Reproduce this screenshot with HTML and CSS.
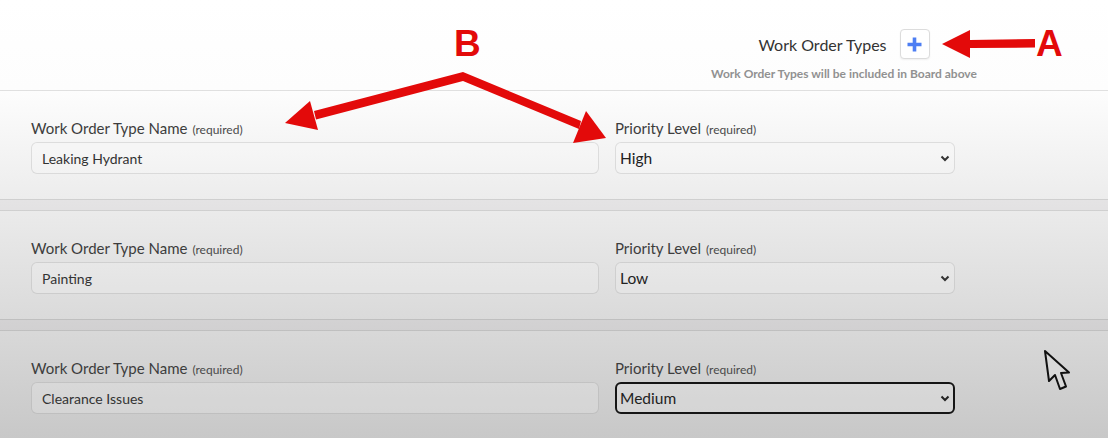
FILE: index.html
```html
<!DOCTYPE html>
<html lang="en">
<head>
<meta charset="utf-8">
<title>Work Order Types</title>
<link rel="stylesheet" href="styles.css">
</head>
<body>
<div class="page">
  <header class="top">
    <div class="types">
      <div class="types-row">
        <span class="types-title">Work Order Types</span>
        <button class="add-btn" type="button" aria-label="Add work order type">
          <svg width="15" height="15" viewBox="0 0 15 15"><path d="M7.5 0.5v14M0.5 7.5h14" stroke="#4d7ef3" stroke-width="3.6" fill="none"/></svg>
        </button>
      </div>
      <p class="types-note">Work Order Types will be included in Board above</p>
    </div>
  </header>

  <main class="list">
    <section class="row">
      <div class="field">
        <label class="label">Work Order Type Name <small>(required)</small></label>
        <input class="input" type="text" value="Leaking Hydrant">
      </div>
      <div class="field">
        <label class="label">Priority Level <small>(required)</small></label>
        <div class="select-wrap">
          <select class="select"><option selected>High</option><option>Medium</option><option>Low</option></select>
          <svg class="chev" width="10" height="7" viewBox="0 0 10 7"><path d="M1.5 1.5L5 5l3.5-3.5" stroke="#333" stroke-width="2" fill="none"/></svg>
        </div>
      </div>
    </section>

    <section class="row">
      <div class="field">
        <label class="label">Work Order Type Name <small>(required)</small></label>
        <input class="input" type="text" value="Painting">
      </div>
      <div class="field">
        <label class="label">Priority Level <small>(required)</small></label>
        <div class="select-wrap">
          <select class="select"><option>High</option><option>Medium</option><option selected>Low</option></select>
          <svg class="chev" width="10" height="7" viewBox="0 0 10 7"><path d="M1.5 1.5L5 5l3.5-3.5" stroke="#333" stroke-width="2" fill="none"/></svg>
        </div>
      </div>
    </section>

    <section class="row">
      <div class="field">
        <label class="label">Work Order Type Name <small>(required)</small></label>
        <input class="input" type="text" value="Clearance Issues">
      </div>
      <div class="field">
        <label class="label">Priority Level <small>(required)</small></label>
        <div class="select-wrap">
          <select class="select select-focus"><option>High</option><option selected>Medium</option><option>Low</option></select>
          <svg class="chev" width="10" height="7" viewBox="0 0 10 7"><path d="M1.5 1.5L5 5l3.5-3.5" stroke="#222" stroke-width="2" fill="none"/></svg>
        </div>
      </div>
    </section>
  </main>

  <div class="annot" aria-hidden="true">
    <svg class="annot-svg" width="1108" height="438" viewBox="0 0 1108 438">
      <g fill="#e30a0a" stroke="none">
        <!-- A arrow -->
        <polygon points="1035,39 970,40 970,30 942,44 970,58 970,48 1035,47.5"/>
        <!-- B arrows -->
        <polygon points="314,111 463,72 581,121 579,129 463,81 316,119.5"/>
        <polygon points="285,123 310,101 318,130"/>
        <polygon points="606,138 586,111 573,143"/>
      </g>
      <!-- mouse cursor -->
      <path class="cursor" d="M1045 351 L1049 381 L1055 375 L1060 389 L1066 386.5 L1061 373 L1069 372.5 Z"/>
    </svg>
    <span class="tag tag-a">A</span>
    <span class="tag tag-b">B</span>
  </div>
</div>
</body>
</html>
```

FILE: styles.css
```css
* { box-sizing: border-box; }

html, body {
  margin: 0;
  padding: 0;
}

body {
  font-family: Lato, "Open Sans", "Liberation Sans", sans-serif;
  color: #333;
  background: #c9c9c9;
}

.page {
  position: relative;
  width: 1108px;
  min-height: 438px;
  overflow: hidden;
  background: linear-gradient(to bottom, #ffffff 0px, #fdfdfd 90px, #c8c8c8 438px);
}

/* header */
.top {
  height: 90px;
  display: flex;
  justify-content: flex-end;
  padding-top: 29px;
  padding-right: 35px;
}

.types {
  width: 458px;
  display: flex;
  flex-direction: column;
  align-items: center;
}

.types-row {
  display: flex;
  align-items: center;
  gap: 13px;
}

.types-title {
  font-size: 16px;
  color: #333;
}

.add-btn {
  width: 30px;
  height: 30px;
  padding: 0;
  display: flex;
  align-items: center;
  justify-content: center;
  background: #fff;
  border: 1px solid #dcdcdc;
  border-radius: 4px;
  box-shadow: 0 1px 2px rgba(0,0,0,0.06);
}

.types-note {
  margin: 8px 0 0;
  font-size: 12px;
  font-weight: 700;
  line-height: 14px;
  color: #919191;
}

/* list of rows */
.list {
  display: flex;
  flex-direction: column;
}

.row {
  height: 120px;
  display: grid;
  grid-template-columns: 568px 340px;
  column-gap: 16px;
  align-content: start;
  padding: 28px 0 0 31px;
  border-top: 1px solid rgba(0,0,0,0.11);
  border-bottom: 10px solid rgba(70,40,70,0.045);
  box-shadow: inset 0 -1px 0 rgba(0,0,0,0.12);
}

.field {
  display: flex;
  flex-direction: column;
  gap: 5px;
}

.label {
  display: flex;
  align-items: baseline;
  gap: 5px;
  height: 18px;
  font-size: 15px;
  line-height: 18px;
  color: #3d3d3d;
}

.label small {
  font-size: 12px;
  line-height: 18px;
  color: #4a4a4a;
}

.input {
  height: 32px;
  width: 100%;
  padding: 0 10px;
  font-family: inherit;
  font-size: 14px;
  color: #333;
  background: rgba(255,255,255,0.18);
  border: 1px solid rgba(0,0,0,0.1);
  border-radius: 6px;
  outline: none;
}

.select-wrap {
  display: grid;
  align-items: center;
}

.select,
.chev {
  grid-area: 1 / 1;
}

.select {
  -webkit-appearance: none;
  appearance: none;
  height: 32px;
  width: 100%;
  padding: 0 24px 0 4px;
  font-family: inherit;
  font-size: 15.5px;
  color: #222;
  background: rgba(255,255,255,0.18);
  border: 1px solid rgba(0,0,0,0.1);
  border-radius: 6px;
  outline: none;
}

.select-focus {
  border: 2px solid #151515;
  padding-left: 3px;
}

.chev {
  justify-self: end;
  margin-right: 5px;
  pointer-events: none;
}

/* annotation overlay */
.annot {
  position: absolute;
  inset: 0;
  pointer-events: none;
}

.annot-svg {
  position: absolute;
  left: 0;
  top: 0;
}

.cursor {
  fill: #d9d9d9;
  stroke: #111;
  stroke-width: 2;
  stroke-linejoin: round;
}

.tag {
  position: absolute;
  font-family: "Liberation Sans", Arial, sans-serif;
  font-weight: 700;
  font-size: 37px;
  line-height: 1;
  color: #e30a0a;
}

.tag-a { left: 1036px; top: 25px; }
.tag-b { left: 454px; top: 25px; }
```
